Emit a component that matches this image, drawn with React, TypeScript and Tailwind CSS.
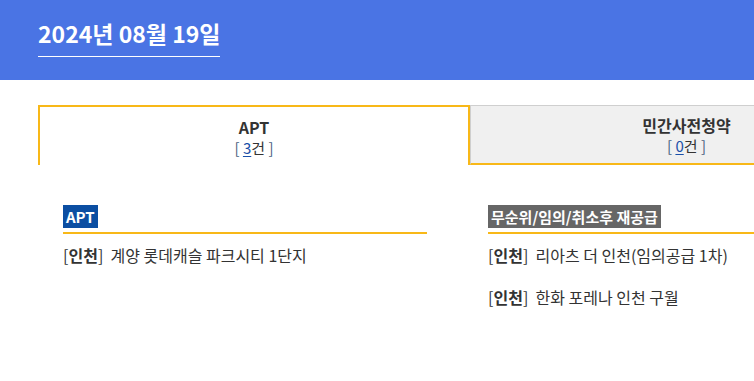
const font = "font-['Noto_Sans_CJK_KR','Noto_Sans',sans-serif]";

type Item = { region: string; name: string };

const aptItems: Item[] = [{ region: "인천", name: "계양 롯데캐슬 파크시티 1단지" }];

const remainItems: Item[] = [
  { region: "인천", name: "리아츠 더 인천(임의공급 1차)" },
  { region: "인천", name: "한화 포레나 인천 구월" },
];

const Section = ({
  label,
  labelClass,
  items,
  width,
}: {
  label: string;
  labelClass: string;
  items: Item[];
  width: string;
}) => (
  <div className={`${width} shrink-0`}>
    <div className="border-b-2 border-[#f8b818] pb-[4px]">
      <span className={`inline-block px-[3px] text-[15px] leading-[23px] font-bold text-white ${labelClass}`}>
        {label}
      </span>
    </div>
    <ul className="mt-[9px] flex flex-col gap-[18px]">
      {items.map((item, i) => (
        <li key={i} className="text-[16px] leading-[24px] text-[#333]">
          [<span className="font-bold">{item.region}</span>]&nbsp; {item.name}
        </li>
      ))}
    </ul>
  </div>
);

const Count = ({ n }: { n: number }) => (
  <span className="text-[15px] leading-[20px] text-[#4a5f80]">
    [&nbsp;<span className="text-[#1a4fa8] underline underline-offset-2">{n}</span>
    <span className="text-[#333]">건</span>&nbsp;]
  </span>
);

export default function App() {
  return (
    <div className={`${font} h-[381px] w-[754px] overflow-hidden bg-white`}>
      {/* Header */}
      <header className="h-[80px] bg-[#4a74e4] pl-[38px] pt-[17px]">
        <h1 className="inline-block border-b border-white pb-[7px] text-[23px] leading-[32px] font-bold text-white">
          2024년 08월 19일
        </h1>
      </header>

      {/* Tabs */}
      <div className="ml-[38px] mt-[25px] flex w-[864px]">
        <div className="flex h-[60px] w-[432px] flex-col items-center border-x-2 border-t-2 border-[#f8b818] bg-white pt-[9px]">
          <span className="text-[16px] leading-[22px] font-bold text-[#333]">APT</span>
          <Count n={3} />
        </div>
        <div className="flex h-[60px] w-[432px] flex-col items-center border-t border-l border-b-2 border-t-[#cfcfcf] border-l-[#cfcfcf] border-b-[#f8b818] bg-[#f0f0f0] pt-[8px]">
          <span className="text-[16px] leading-[22px] font-bold text-[#333]">민간사전청약</span>
          <Count n={0} />
        </div>
      </div>

      {/* Content */}
      <div className="ml-[63px] mt-[39px] flex gap-[61px]">
        <Section label="APT" labelClass="bg-[#0b4ea2]" items={aptItems} width="w-[364px]" />
        <Section label="무순위/임의/취소후 재공급" labelClass="bg-[#666]" items={remainItems} width="w-[364px]" />
      </div>
    </div>
  );
}
